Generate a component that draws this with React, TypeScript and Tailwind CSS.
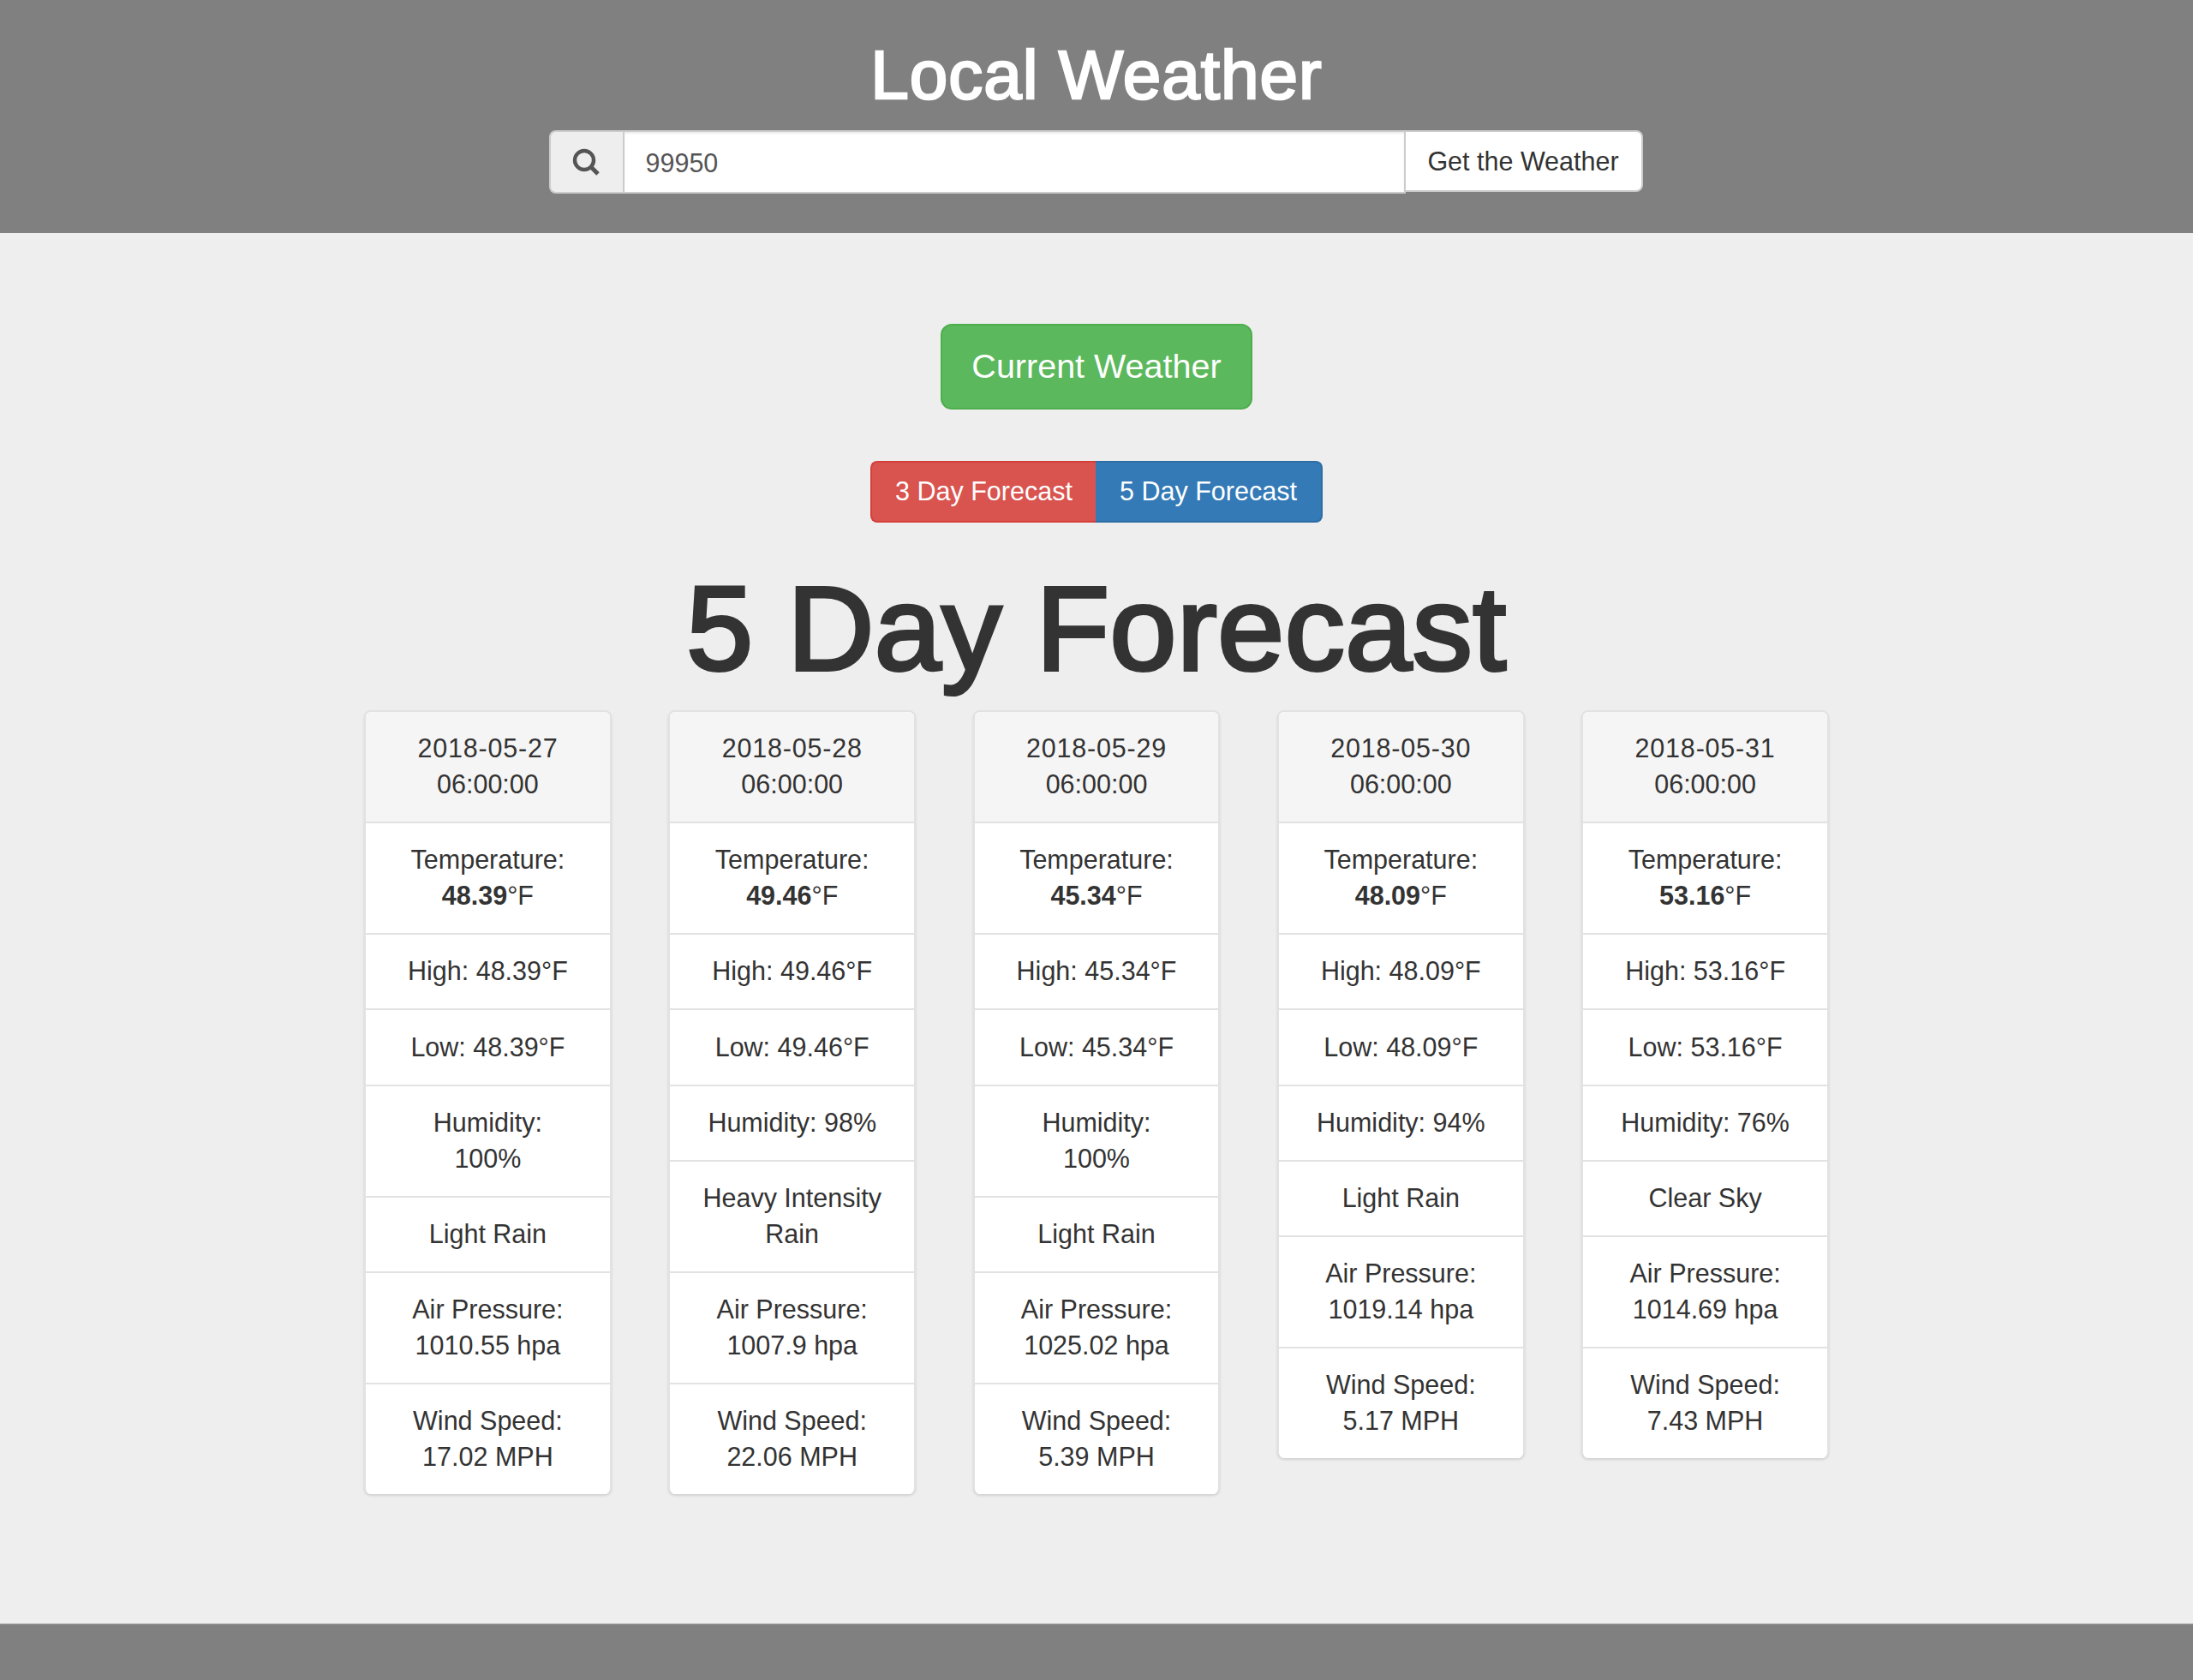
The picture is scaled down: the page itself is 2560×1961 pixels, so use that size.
const F = { fontFamily: '"Liberation Sans", Arial, sans-serif' };

type Day = { date: string; temp: string; hum: string; desc: string; air: string; wind: string };

const days: Day[] = [
  { date: "2018-05-27", temp: "48.39", hum: "100%", desc: "Light Rain", air: "1010.55 hpa", wind: "17.02 MPH" },
  { date: "2018-05-28", temp: "49.46", hum: "98%", desc: "Heavy Intensity Rain", air: "1007.9 hpa", wind: "22.06 MPH" },
  { date: "2018-05-29", temp: "45.34", hum: "100%", desc: "Light Rain", air: "1025.02 hpa", wind: "5.39 MPH" },
  { date: "2018-05-30", temp: "48.09", hum: "94%", desc: "Light Rain", air: "1019.14 hpa", wind: "5.17 MPH" },
  { date: "2018-05-31", temp: "53.16", hum: "76%", desc: "Clear Sky", air: "1014.69 hpa", wind: "7.43 MPH" },
];

function Row({ children, head }: { children: React.ReactNode; head?: boolean }) {
  return (
    <div className={`px-[36.5px] py-[22.3px] text-center border-t-2 border-[#e2e2e2] first:border-t-0 ${head ? "bg-[#f5f5f5]" : "bg-white"}`}>
      {children}
    </div>
  );
}

function Card({ d }: { d: Day }) {
  return (
    <div className="w-[288.5px] shrink-0 rounded-lg border-2 border-[#e2e2e2] border-b-0 overflow-hidden bg-white shadow-[0_2px_3px_rgba(0,0,0,0.12)] text-[30.5px] leading-[41.7px] text-[#333]">
      <Row head>
        <span className="tracking-[0.8px]">{d.date}</span> 06:00:00
      </Row>
      <Row>
        Temperature: <b>{d.temp}</b>°F
      </Row>
      <Row>High: {d.temp}°F</Row>
      <Row>Low: {d.temp}°F</Row>
      <Row>Humidity: {d.hum}</Row>
      <Row>{d.desc}</Row>
      <Row>Air Pressure: {d.air}</Row>
      <Row>Wind Speed: {d.wind}</Row>
    </div>
  );
}

function SearchIcon() {
  return (
    <svg width="33" height="33" viewBox="0 0 33 33" fill="none" stroke="#555">
      <circle cx="14" cy="14" r="11" strokeWidth="4.4" />
      <path d="M22 22 L30 30" strokeWidth="5" />
    </svg>
  );
}

export default function App() {
  return (
    <div style={F} className="min-h-[1961px] flex flex-col bg-[#eee]">
      <header className="h-[272px] bg-[#808080] flex flex-col items-center">
        <h1 className="mt-[42px] h-[110px] text-[80px] leading-[92px] tracking-[1px] font-normal text-white [-webkit-text-stroke:2.5px_white]">Local Weather</h1>
        <div className="ml-[-2px] flex items-start w-[1277px] text-[30.5px]">
          <div className="w-[86px] h-[74px] flex items-center justify-center bg-[#eee] border-2 border-[#ccc] border-r-0 rounded-l-lg">
            <SearchIcon />
          </div>
          <div className="w-[914px] h-[74px] flex items-center px-[25px] pt-[3px] bg-white border-2 border-[#ccc] text-[#555] shadow-[inset_0_2px_2px_rgba(0,0,0,0.075)]">99950</div>
          <div className="w-[277px] h-[72px] flex items-center justify-center pt-[2px] bg-white border-2 border-l-0 border-[#ccc] rounded-r-lg text-[#333]">Get the Weather</div>
        </div>
      </header>
      <main className="flex-1 flex flex-col items-center">
        <div className="mt-[106px] w-[364px] h-[100px] flex items-center justify-center rounded-[13px] bg-[#5cb85c] border-2 border-[#4cae4c] text-white text-[39.5px]">Current Weather</div>
        <div className="mt-[60px] flex h-[72px] text-[30.5px] text-white">
          <div className="w-[263px] flex items-center justify-center bg-[#d9534f] border-2 border-[#d43f3a] border-r-0 rounded-l-lg">3 Day Forecast</div>
          <div className="w-[265px] flex items-center justify-center bg-[#337ab7] border-2 border-[#2e6da4] border-l-0 rounded-r-lg">5 Day Forecast</div>
        </div>
        <h2 className="mt-[39px] h-[180px] text-[140px] leading-[170px] tracking-[0.6px] font-normal text-[#333] [-webkit-text-stroke:4px_#333]">5 Day Forecast</h2>
        <div className="flex items-start gap-[66.8px]">
          {days.map((d) => (
            <Card key={d.date} d={d} />
          ))}
        </div>
      </main>
      <footer className="h-[66px] bg-[#808080] border-t border-[#aaa]" />
    </div>
  );
}
